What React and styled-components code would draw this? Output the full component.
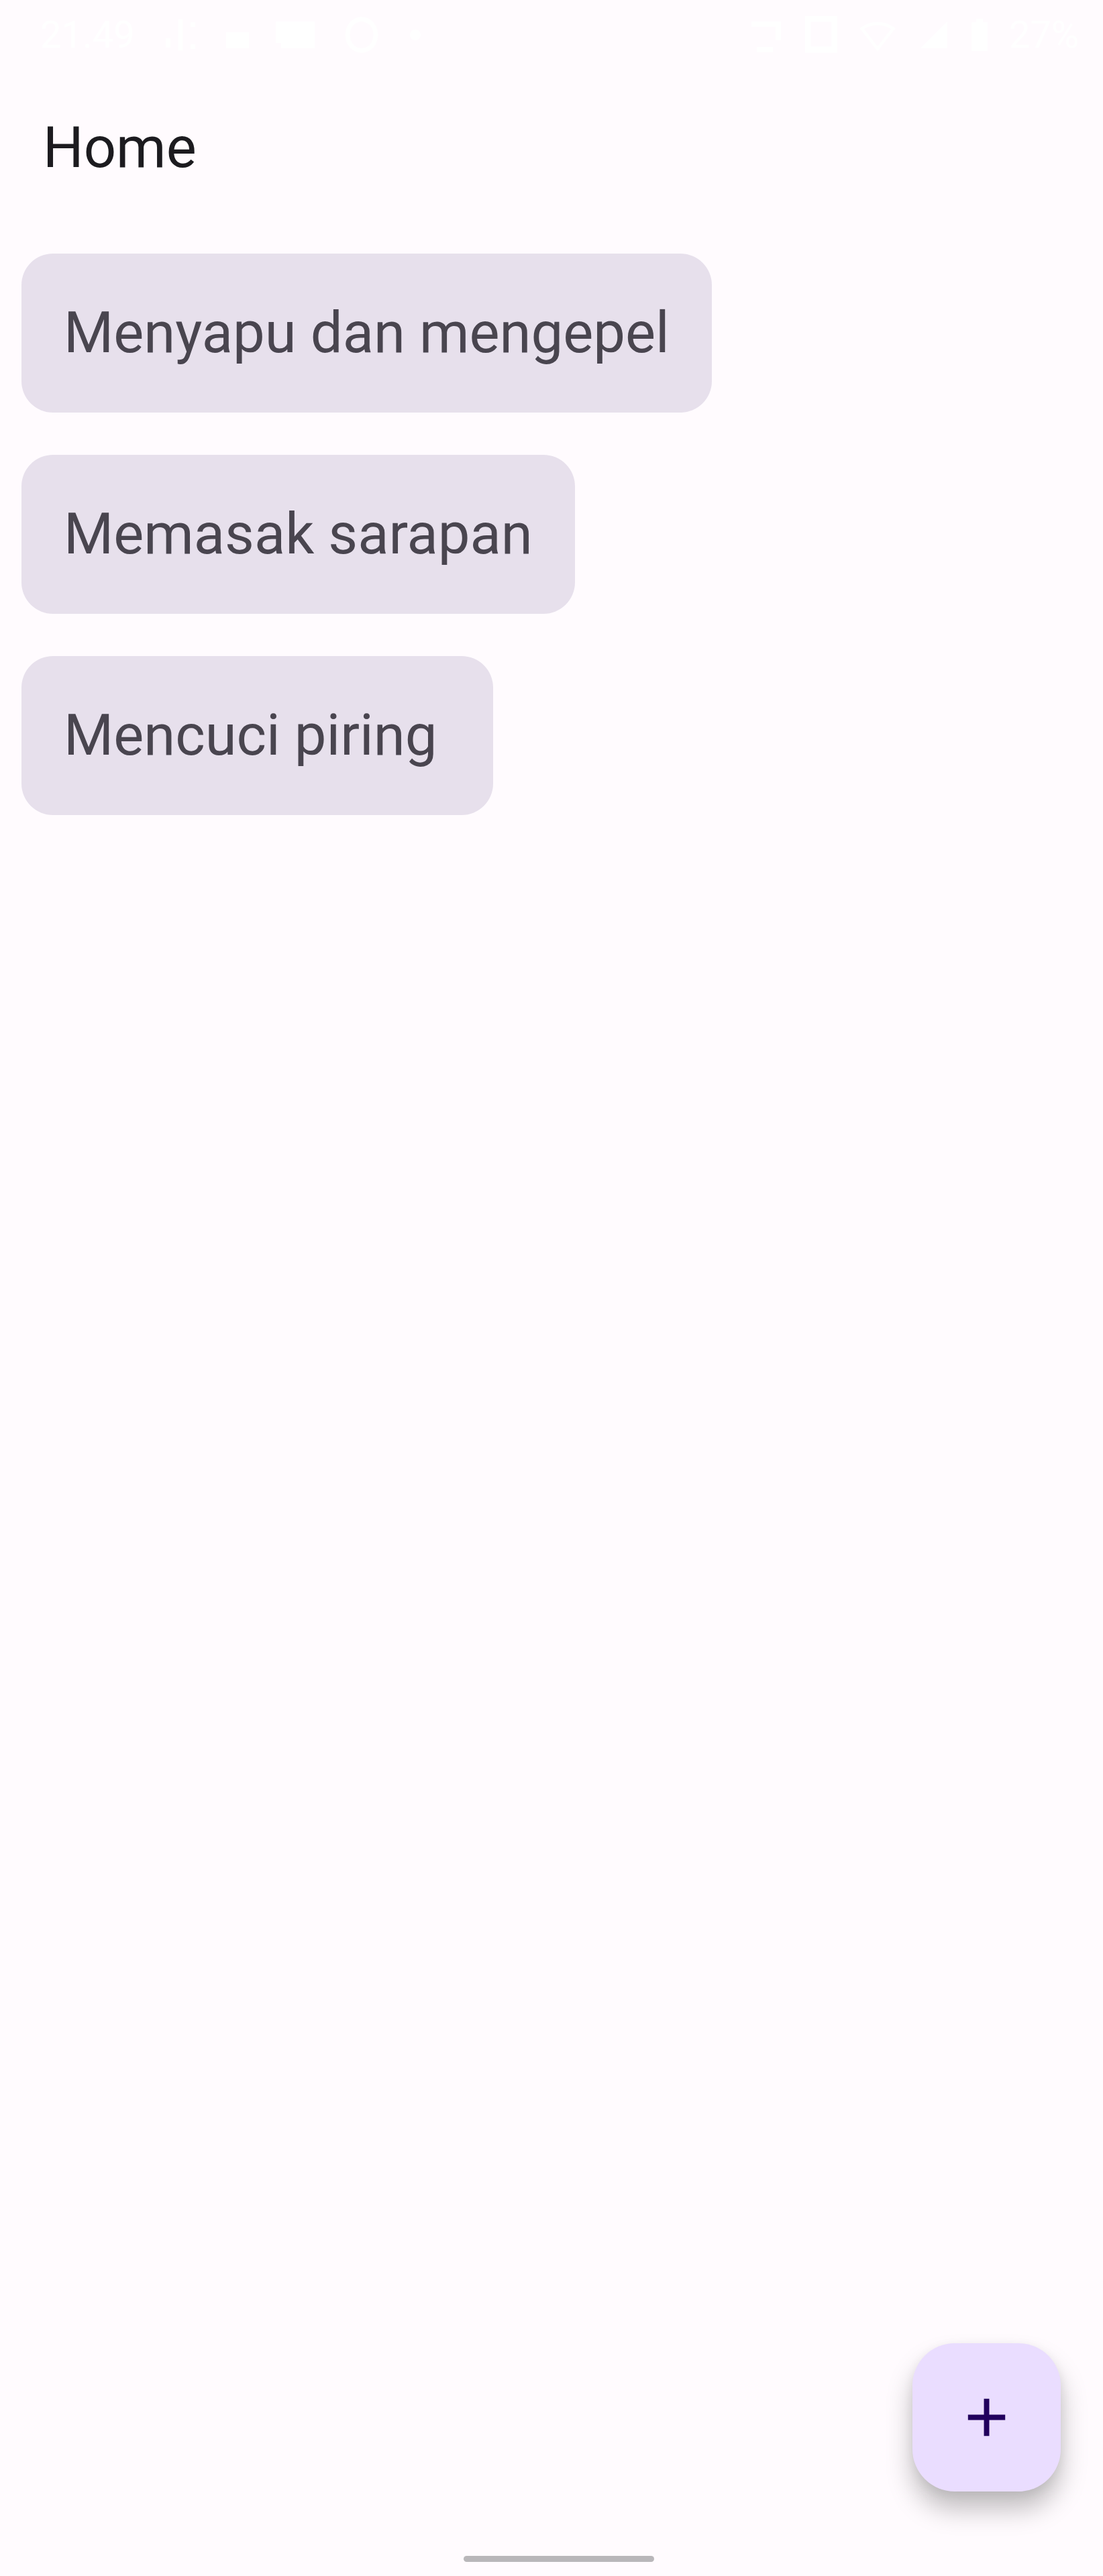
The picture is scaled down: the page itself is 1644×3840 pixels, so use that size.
import React from "react";
import styled, { createGlobalStyle } from "styled-components";

const GlobalStyle = createGlobalStyle`
  *, *::before, *::after { box-sizing: border-box; }
  body {
    margin: 0;
    background: #fffbfe;
    color: #1c1b1f;
    font-family: Roboto, "Liberation Sans", sans-serif;
  }
`;

const Screen = styled.div`
  display: flex;
  flex-direction: column;
  min-height: 100vh;
`;

const StatusBar = styled.div`
  display: flex;
  align-items: center;
  justify-content: space-between;
  height: 94px;
  padding: 10px 36px 0 60px;
  color: #ffffff;
  font-size: 56px;
  line-height: 64px;
`;

const StatusGroup = styled.div`
  display: flex;
  align-items: center;
  gap: ${(props) => props.$gap}px;
`;

const AppBar = styled.header`
  display: flex;
  align-items: center;
  height: 253px;
  padding: 0 64px;
`;

const Title = styled.h1`
  margin: 0;
  font-size: 85px;
  line-height: 111px;
  font-weight: 400;
`;

const TaskList = styled.ul`
  flex: 1;
  display: flex;
  flex-direction: column;
  align-items: flex-start;
  gap: 63px;
  margin: 0;
  padding: 31px 32px;
  list-style: none;
`;

const TaskCard = styled.li`
  padding: 63px;
  border-radius: 47px;
  background: #e7e0ec;
  color: #49454f;
  font-size: 85px;
  line-height: 111px;
  white-space: pre-wrap;
`;

const Actions = styled.div`
  display: flex;
  justify-content: flex-end;
  padding: 0 63px 63px;
`;

const AddButton = styled.button`
  display: grid;
  place-items: center;
  width: 221px;
  height: 221px;
  padding: 0;
  border: 0;
  border-radius: 63px;
  background: #eaddff;
  color: #21005d;
  box-shadow: 0 26px 38px rgba(0, 0, 0, 0.25), 0 4px 16px rgba(0, 0, 0, 0.06);
  cursor: pointer;
`;

const NavigationBar = styled.div`
  display: flex;
  justify-content: center;
  align-items: flex-start;
  height: 63px;
  padding: 33px 0 0 22px;
`;

const Handle = styled.div`
  width: 284px;
  height: 9px;
  border-radius: 5px;
  background: #b9b7ba;
`;

const tasks = ["Menyapu dan mengepel", "Memasak sarapan", "Mencuci piring "];

export default function App() {
  return (
    <Screen>
      <GlobalStyle />
      <StatusBar>
        <StatusGroup $gap={40}>
          <span>21.49</span>
          <svg width="56" height="56" viewBox="0 0 24 24" fill="none" stroke="currentColor" strokeWidth="3">
            <path d="M12 2v20M4 14v6M20 4v3M20 18v3" />
          </svg>
          <svg width="34" height="56" viewBox="0 0 34 56" fill="currentColor">
            <path d="M0 24h34v24H0z" />
          </svg>
          <svg width="60" height="56" viewBox="0 0 60 56" fill="currentColor">
            <path d="M0 8h58v40H8V40H0z" />
          </svg>
          <svg width="56" height="56" viewBox="0 0 24 24" fill="none" stroke="currentColor" strokeWidth="3">
            <ellipse cx="12" cy="12" rx="9" ry="10" />
          </svg>
          <svg width="24" height="24" viewBox="0 0 24 24" fill="currentColor">
            <circle cx="12" cy="12" r="8" />
          </svg>
        </StatusGroup>
        <StatusGroup $gap={32}>
          <svg width="48" height="56" viewBox="0 0 48 56" fill="none" stroke="currentColor" strokeWidth="8">
            <path d="M0 12h40v24M8 50h24" />
          </svg>
          <svg width="48" height="56" viewBox="0 0 48 56" fill="none" stroke="currentColor" strokeWidth="9">
            <path d="M4 4h40v46H4z" />
          </svg>
          <svg width="56" height="56" viewBox="0 0 24 24" fill="none" stroke="currentColor" strokeWidth="2">
            <path d="M12 21 2 8a17 17 0 0 1 20 0z" />
          </svg>
          <svg width="48" height="48" viewBox="0 0 24 24" fill="currentColor">
            <path d="M2 22h20V2z" />
          </svg>
          <svg width="24" height="48" viewBox="0 0 24 48" fill="currentColor">
            <path d="M7 0h10v5h7v43H0V5h7z" />
          </svg>
          <span>27%</span>
        </StatusGroup>
      </StatusBar>
      <AppBar>
        <Title>Home</Title>
      </AppBar>
      <TaskList>
        {tasks.map((task) => (
          <TaskCard key={task}>{task}</TaskCard>
        ))}
      </TaskList>
      <Actions>
        <AddButton type="button" aria-label="Tambah">
          <svg width="95" height="95" viewBox="0 0 24 24" fill="currentColor" aria-hidden="true">
            <path d="M19 13h-6v6h-2v-6H5v-2h6V5h2v6h6z" />
          </svg>
        </AddButton>
      </Actions>
      <NavigationBar>
        <Handle />
      </NavigationBar>
    </Screen>
  );
}
